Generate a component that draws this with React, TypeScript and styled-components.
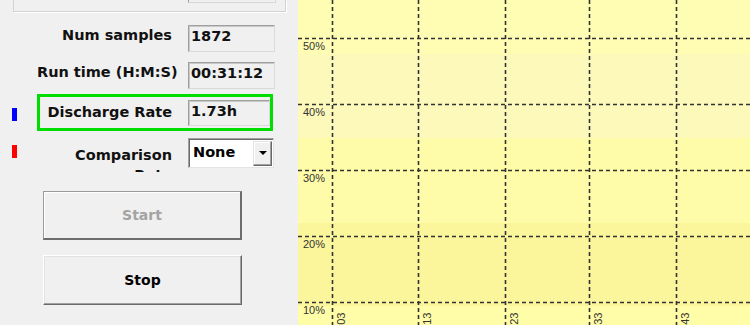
import styled, { createGlobalStyle } from 'styled-components';

const GlobalStyle = createGlobalStyle`
	html, body {
		margin: 0;
		padding: 0;
		overflow: hidden;
		background: #f0f0f0;
	}
	body {
		font-family: "DejaVu Sans", "Liberation Sans", sans-serif;
	}
`;

const Window = styled.div`
	display: flex;
	width: 750px;
	height: 325px;
	overflow: hidden;
`;

const Panel = styled.div`
	width: 298px;
	flex-shrink: 0;
	background: #f0f0f0;
	display: flex;
	flex-direction: column;
`;

const GroupBox = styled.div`
	margin-left: 13px;
	width: 271px;
	height: 11px;
	border: 1px solid #d3d3d3;
	border-top: none;
	box-shadow: 1px 1px 0 #fff;
	display: flex;
`;

const GroupEdit = styled.div`
	margin-left: 174px;
	width: 86px;
	height: 2px;
	border: 1px solid #a0a0a0;
	border-top: none;
	border-bottom-color: #d8d8d8;
	border-right-color: #d8d8d8;
`;

const Row = styled.div<{ $gap: number }>`
	display: grid;
	grid-template-columns: 37px 151px 87px;
	align-items: start;
	margin-top: ${(p) => p.$gap}px;
`;

const Marker = styled.div<{ $color: string; $top: number }>`
	width: 5px;
	height: 13px;
	margin-left: 12px;
	margin-top: ${(p) => p.$top}px;
	background: ${(p) => p.$color};
`;

const Label = styled.div<{ $top?: number; $clip?: boolean }>`
	font: bold 14.5px "DejaVu Sans", sans-serif;
	line-height: ${(p) => (p.$clip ? '20px' : '17px')};
	color: #111;
	text-align: right;
	padding-right: 16px;
	white-space: ${(p) => (p.$clip ? 'normal' : 'nowrap')};
	margin-top: ${(p) => p.$top ?? 2}px;
	height: ${(p) => (p.$clip ? '27px' : 'auto')};
	overflow: ${(p) => (p.$clip ? 'hidden' : 'visible')};
	direction: ${(p) => (p.$clip ? 'ltr' : 'rtl')};
	unicode-bidi: plaintext;
`;

const ValueBox = styled.div<{ $w?: number; $h?: number }>`
	box-sizing: border-box;
	width: ${(p) => p.$w ?? 87}px;
	height: ${(p) => p.$h ?? 27}px;
	padding: 2px 0 0 2px;
	border: 1px solid #a0a0a0;
	border-right-color: #dadada;
	border-bottom-color: #dadada;
	box-shadow: inset 1px 1px 0 #c8c8c8;
	font: bold 14.5px "DejaVu Sans", sans-serif;
	line-height: 17px;
	color: #111;
	white-space: nowrap;
	overflow: hidden;
`;

const Highlight = styled.div`
	grid-column: 2 / 4;
	box-sizing: border-box;
	width: 236px;
	height: 37px;
	border: 3px solid #00dd00;
	display: grid;
	grid-template-columns: 148px 82px;
	align-items: center;
`;

const Combo = styled.div`
	box-sizing: border-box;
	width: 86px;
	height: 30px;
	background: #fff;
	border: 1px solid #a0a0a0;
	border-right-color: #e3e3e3;
	border-bottom-color: #e3e3e3;
	box-shadow: inset 1px 1px 0 #696969;
	display: flex;
	align-items: center;
	padding: 0 1px 0 4px;
`;

const ComboText = styled.span`
	flex: 1;
	font: bold 14.5px "DejaVu Sans", sans-serif;
	color: #000;
	margin-top: -2px;
`;

const DropButton = styled.div`
	box-sizing: border-box;
	width: 19px;
	height: 25px;
	background: #f0f0f0;
	border: 1px solid #e3e3e3;
	border-right-color: #696969;
	border-bottom-color: #696969;
	box-shadow: inset -1px -1px 0 #a0a0a0, inset 1px 1px 0 #fff;
	display: flex;
	align-items: center;
	justify-content: center;
`;

const Arrow = styled.div`
	width: 0;
	height: 0;
	border-left: 4px solid transparent;
	border-right: 4px solid transparent;
	border-top: 4px solid #000;
`;

const Buttons = styled.div`
	display: flex;
	flex-direction: column;
	gap: 15px;
	margin: 19px 0 0 43px;
`;

const PushButton = styled.button<{ $disabled?: boolean }>`
	box-sizing: border-box;
	width: 199px;
	height: ${(p) => (p.$disabled ? 49 : 50)}px;
	padding: 0;
	background: #f0f0f0;
	font: bold 14px "DejaVu Sans", sans-serif;
	color: ${(p) => (p.$disabled ? '#a3a3a3' : '#000')};
	border: 1px solid ${(p) => (p.$disabled ? '#9a9a9a' : '#fff')};
	border-right: ${(p) => (p.$disabled ? '2px solid #6d6d6d' : '1px solid #696969')};
	border-bottom: ${(p) => (p.$disabled ? '2px solid #6d6d6d' : '1px solid #696969')};
	box-shadow: ${(p) =>
		p.$disabled ? 'inset 1px 1px 0 #fff' : 'inset -1px -1px 0 #a0a0a0, inset 1px 1px 0 #e3e3e3'};
`;

const ChartArea = styled.div`
	flex: 1;
	height: 325px;
	overflow: hidden;
	background: #fffdb0;
`;

const bands = [
	{ y: 0, h: 54, c: '#fffdb4' },
	{ y: 54, h: 84, c: '#fcf9bb' },
	{ y: 138, h: 85, c: '#fffca9' },
	{ y: 223, h: 83, c: '#fbf59c' },
	{ y: 306, h: 19, c: '#fffda7' },
];

const vLines = [34, 120, 207, 291, 378];
const hLines = [
	{ y: 38, t: '50%' },
	{ y: 104, t: '40%' },
	{ y: 170, t: '30%' },
	{ y: 236, t: '20%' },
	{ y: 302, t: '10%' },
];
const times = ['00:00:03', '00:08:13', '00:16:23', '00:24:33', '00:32:43'];

function Chart() {
	return (
		<svg width={452} height={325} style={{ display: 'block' }}>
			{bands.map((b) => (
				<rect key={b.y} x={0} y={b.y} width={452} height={b.h} fill={b.c} />
			))}
			{vLines.map((x) => (
				<line key={x} x1={x + 0.5} y1={0} x2={x + 0.5} y2={325} stroke='#333' strokeWidth={1.6} strokeDasharray='4 3' />
			))}
			{hLines.map((l) => (
				<line key={l.y} x1={0} y1={l.y + 0.5} x2={452} y2={l.y + 0.5} stroke='#333' strokeWidth={1.6} strokeDasharray='4 3' />
			))}
			{hLines.map((l) => (
				<text key={l.t} x={5} y={l.y + 12} fontFamily='"Liberation Sans", Arial, sans-serif' fontSize={11} fill='#333'>
					{l.t}
				</text>
			))}
			{vLines.map((x, i) => (
				<text
					key={times[i]}
					transform={`translate(${x + 13}, 312.5) rotate(-90)`}
					textAnchor='end'
					fontFamily='"Liberation Sans", Arial, sans-serif'
					fontSize={11}
					fill='#333'
				>
					{times[i]}
				</text>
			))}
		</svg>
	);
}

export default function App() {
	return (
		<>
			<GlobalStyle />
			<Window>
				<Panel>
					<GroupBox>
						<GroupEdit />
					</GroupBox>

					<Row $gap={13}>
						<div />
						<Label>Num samples</Label>
						<ValueBox>1872</ValueBox>
					</Row>

					<Row $gap={10}>
						<div />
						<Label>Run time (H:M:S)</Label>
						<ValueBox>00:31:12</ValueBox>
					</Row>

					<Row $gap={5}>
						<Marker $color='#0000ff' $top={14} />
						<Highlight>
							<Label $top={0}>Discharge Rate</Label>
							<ValueBox $w={82} $h={26}>
								1.73h
							</ValueBox>
						</Highlight>
					</Row>

					<Row $gap={7}>
						<Marker $color='#ff0000' $top={7} />
						<Label $top={7} $clip>
							Comparison Rate
						</Label>
						<Combo>
							<ComboText>None</ComboText>
							<DropButton>
								<Arrow />
							</DropButton>
						</Combo>
					</Row>

					<Buttons>
						<PushButton $disabled disabled>
							Start
						</PushButton>
						<PushButton>Stop</PushButton>
					</Buttons>
				</Panel>
				<ChartArea>
					<Chart />
				</ChartArea>
			</Window>
		</>
	);
}
